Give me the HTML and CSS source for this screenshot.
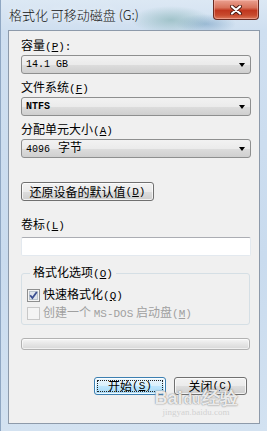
FILE: index.html
```html
<!DOCTYPE html>
<html>
<head>
<meta charset="utf-8">
<link rel="stylesheet" href="styles.css">
</head>
<body>
<div class="window">
  <div class="titlebar">
    <span class="title">格式化 可移动磁盘 (G:)</span>
    <div class="close">
      <svg width="12" height="10" viewBox="0 0 12 10"><path d="M2 1.5 L10 8.5 M10 1.5 L2 8.5" stroke="#4a1a12" stroke-width="4" stroke-linecap="round"/><path d="M2 1.5 L10 8.5 M10 1.5 L2 8.5" stroke="#ffffff" stroke-width="2.2" stroke-linecap="round"/></svg>
    </div>
  </div>
  <div class="client">
    <div class="label">容量<span class="m">(<u>P</u>):</span></div>
    <div class="combo"><span class="val">14.1 GB</span><span class="arrow"></span></div>

    <div class="label sp">文件系统<span class="m">(<u>F</u>)</span></div>
    <div class="combo"><span class="val bold">NTFS</span><span class="arrow"></span></div>

    <div class="label sp">分配单元大小<span class="m">(<u>A</u>)</span></div>
    <div class="combo"><span class="val">4096 <span class="cjk">字节</span></span><span class="arrow"></span></div>

    <div class="btn reset">还原设备的默认值<span class="m">(<u>D</u>)</span></div>

    <div class="label vol">卷标<span class="m">(<u>L</u>)</span></div>
    <div class="textbox"></div>

    <fieldset class="group">
      <legend>格式化选项<span class="m">(<u>O</u>)</span></legend>
      <div class="check">
        <svg class="box" width="13" height="13" viewBox="0 0 13 13"><rect x="0.5" y="0.5" width="12" height="12" fill="#f4f4f4" stroke="#8e8f8f"/><rect x="2.5" y="2.5" width="8" height="8" fill="#dfe5ec" stroke="#b9c3cd"/><path d="M3.2 6.3 L5.4 9 L9.8 3" fill="none" stroke="#3b4f91" stroke-width="1.8"/></svg>
        <span>快速格式化<span class="m">(<u>Q</u>)</span></span>
      </div>
      <div class="check disabled">
        <svg class="box" width="13" height="13" viewBox="0 0 13 13"><rect x="0.5" y="0.5" width="12" height="12" fill="#f4f4f4" stroke="#c8c8c8"/></svg>
        <span>创建一个 <span class="m">MS-DOS</span> 启动盘<span class="m">(<u>M</u>)</span></span>
      </div>
    </fieldset>

    <div class="progress"></div>

    <div class="actions">
      <div class="btn default"><span class="focus">开始<span class="m">(<u>S</u>)</span></span></div>
      <div class="btn">关闭<span class="m">(<u>C</u>)</span></div>
    </div>
  </div>
  <div class="watermark">
    <div class="wm-big">Bai<span class="du">du</span>经验</div>
    <div class="wm-small">jingyan.baidu.com</div>
  </div>
</div>
</body>
</html>
```

FILE: styles.css
```css
html, body {
  margin: 0;
  padding: 0;
}

body {
  width: 267px;
  height: 431px;
  overflow: hidden;
  font-family: "Noto Sans CJK SC", sans-serif;
  font-size: 12px;
  color: #000;
}

.window {
  position: relative;
  width: 267px;
  height: 431px;
  box-sizing: border-box;
  padding: 0 7px 7px 7px;
  background:
    radial-gradient(ellipse 40px 14px at 170px 20px, rgba(120,170,170,0.55), rgba(120,170,170,0) 100%),
    radial-gradient(ellipse 30px 10px at 205px 24px, rgba(90,140,180,0.45), rgba(90,140,180,0) 100%),
    linear-gradient(180deg, #dce8f4 0%, #cfdff0 30px, #c9dbee 60%, #d3e2f1 100%);
  display: flex;
  flex-direction: column;
  border-left: 1px solid #8fa7c3;
}

.titlebar {
  height: 30px;
  display: flex;
  justify-content: space-between;
  align-items: flex-start;
}

.title {
  margin-top: 6px;
  margin-left: 1px;
  font-size: 13px;
  font-weight: 300;
  line-height: 17px;
  color: #111;
  text-shadow: 0 0 6px rgba(255,255,255,0.9);
}

.close {
  width: 46px;
  height: 20px;
  margin-right: 1px;
  box-sizing: border-box;
  border: 1px solid #6b2b22;
  border-top: none;
  border-radius: 0 0 4px 4px;
  background: linear-gradient(180deg, #eaa090 0%, #d8735c 40%, #c0371f 55%, #c84a2e 80%, #dc7a5c 100%);
  box-shadow: inset 0 0 0 1px rgba(255,200,190,0.45);
  display: flex;
  align-items: center;
  justify-content: center;
}

.client {
  flex: 1;
  box-sizing: border-box;
  border: 1px solid #8d9aaa;
  background: #f0f0f0;
  padding: 7px 9px 0 12px;
  display: flex;
  flex-direction: column;
  align-items: flex-start;
}

.m {
  font-family: "Liberation Mono", monospace;
  font-size: 11px;
}

.m u {
  text-underline-offset: 1px;
}

.label {
  line-height: 14px;
  height: 14px;
  margin-bottom: 3px;
}

.label.sp {
  margin-top: 6px;
}

.label.vol {
  margin-top: 16px;
  margin-bottom: 6px;
}

.combo {
  width: 230px;
  height: 19px;
  box-sizing: border-box;
  border: 1px solid #8e8f8f;
  border-radius: 3px;
  background: linear-gradient(180deg, #f2f2f2 0%, #ebebeb 50%, #dddddd 51%, #cfcfcf 100%);
  display: flex;
  align-items: center;
  justify-content: space-between;
  padding: 0 5px 0 4px;
}

.val {
  font-family: "Liberation Mono", monospace;
  font-size: 10px;
  line-height: 14px;
}

.val.bold {
  font-weight: bold;
}

.cjk {
  font-family: "Noto Sans CJK SC", sans-serif;
  font-size: 12px;
  margin-left: 2px;
}

.arrow {
  width: 0;
  height: 0;
  border-left: 3.5px solid transparent;
  border-right: 3.5px solid transparent;
  border-top: 4px solid #000;
  margin-top: 1px;
}

.btn {
  width: 73px;
  height: 18px;
  box-sizing: border-box;
  border: 1px solid #707070;
  border-radius: 3px;
  background: linear-gradient(180deg, #f2f2f2 0%, #ebebeb 50%, #dddddd 51%, #cfcfcf 100%);
  box-shadow: inset 0 0 0 1px rgba(255,255,255,0.7);
  display: flex;
  align-items: center;
  justify-content: center;
  line-height: 14px;
}

.btn.reset {
  width: 133px;
  height: 19px;
  margin-top: 24px;
}

.textbox {
  width: 230px;
  height: 19px;
  box-sizing: border-box;
  background: #fff;
  border: 1px solid #e3e9ef;
  border-top-color: #abadb3;
  border-radius: 2px;
}

.group {
  width: 229px;
  box-sizing: border-box;
  margin: 9px 0 0 0;
  padding: 6px 6px 3px 5px;
  border: 1px solid #d5dfe5;
  border-radius: 3px;
  display: flex;
  flex-direction: column;
  gap: 2px;
}

.group legend {
  padding: 0 3px;
  margin-left: 3px;
  line-height: 14px;
}

.check {
  display: flex;
  align-items: center;
  gap: 3px;
  height: 16px;
  line-height: 14px;
}

.check .box {
  flex: none;
}

.check.disabled {
  color: #a0a0a0;
}

.progress {
  width: 229px;
  height: 12px;
  box-sizing: border-box;
  margin-top: 13px;
  border: 1px solid #b2b2b2;
  border-radius: 3px;
  background: linear-gradient(180deg, #f6f6f6 0%, #e6e6e6 50%, #d8d8d8 100%);
  box-shadow: inset 0 0 0 1px rgba(255,255,255,0.6);
}

.actions {
  align-self: stretch;
  display: flex;
  justify-content: flex-end;
  gap: 8px;
  margin-top: 27px;
  padding-right: 3px;
}

.btn.default {
  width: 72px;
  border-color: #3c7fb1;
  background: linear-gradient(180deg, #eaf6fd 0%, #d9f0fc 50%, #bee6fd 51%, #a7d9f5 100%);
  box-shadow: inset 0 0 0 1px rgba(255,255,255,0.8);
  padding: 2px;
}

.btn.default .focus {
  flex: 1;
  align-self: stretch;
  border: 1px dotted #222;
  display: flex;
  align-items: center;
  justify-content: center;
  line-height: 12px;
}

.watermark {
  position: absolute;
  left: 150px;
  top: 390px;
  width: 90px;
  text-align: center;
  pointer-events: none;
}

.wm-big {
  font-family: "Liberation Sans", sans-serif;
  font-weight: bold;
  font-size: 18px;
  line-height: 16px;
  color: rgba(255,255,255,0.85);
  text-shadow: 0 0 1px rgba(110,110,110,0.9), 0 0 2px rgba(150,150,150,0.7);
}

.wm-big .du {
  font-size: 14px;
  margin: 0 1px;
}

.wm-small {
  font-family: "Liberation Serif", serif;
  font-size: 9px;
  line-height: 10px;
  color: rgba(205,205,205,0.9);
}
```
